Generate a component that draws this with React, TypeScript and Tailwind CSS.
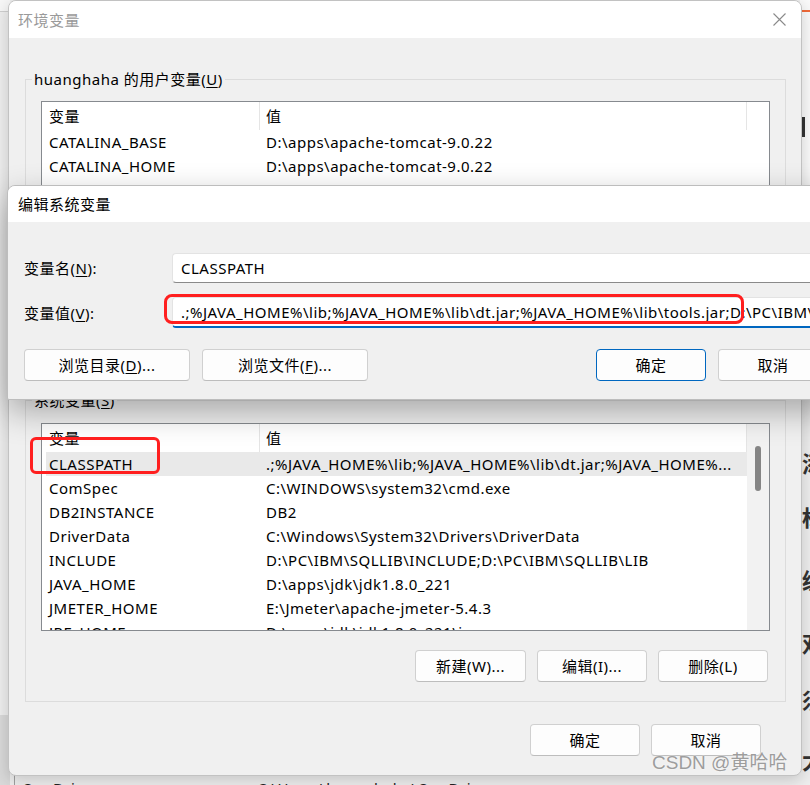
import React from "react";

type Row = [string, string];

function Btn({ children, w, primary }: { children: React.ReactNode; w: string; primary?: boolean }) {
  return (
    <div
      className={
        "h-[32px] rounded-[4px] flex items-center justify-center shrink-0 bg-[#fdfdfd] border " +
        (primary ? "border-[#0067c0] " : "border-[#d0d0d0] border-b-[#bdbdbd] ") +
        w
      }
    >
      {children}
    </div>
  );
}

function VarList({ rows, selected, scrollbar }: { rows: Row[]; selected?: number; scrollbar?: boolean }) {
  return (
    <div className="h-[208px] border border-[#868a8f] bg-white flex overflow-hidden">
      <div className="w-[705px] flex flex-col shrink-0">
        <div className="h-[28px] flex shrink-0">
          <div className="w-[218px] h-full flex items-center pl-[7px] border-r border-[#e5e5e5]">变量</div>
          <div className="flex-1 h-full flex items-center pl-[6px] border-r border-[#e5e5e5]">值</div>
        </div>
        {rows.map(([k, v], i) => (
          <div
            key={k}
            className={
              "h-[24px] flex items-center shrink-0 ml-[4px] " + (i === selected ? "bg-[#e9e9e9]" : "")
            }
          >
            <div className="w-[214px] pl-[3px] whitespace-nowrap overflow-hidden">{k}</div>
            <div className="flex-1 pl-[6px] whitespace-nowrap overflow-hidden">{v}</div>
          </div>
        ))}
      </div>
      <div className={"flex-1 flex justify-center " + (scrollbar ? "bg-[#f2f2f2]" : "bg-white")}>
        {scrollbar && <div className="mt-[22px] w-[6px] h-[45px] rounded-[3px] bg-[#858585]" />}
      </div>
    </div>
  );
}

const userRows: Row[] = [
  ["CATALINA_BASE", "D:\\apps\\apache-tomcat-9.0.22"],
  ["CATALINA_HOME", "D:\\apps\\apache-tomcat-9.0.22"],
  ["OneDrive", "C:\\Users\\huanghaha\\OneDrive"],
  ["Path", "C:\\Users\\huanghaha\\AppData\\Local\\Microsoft\\WindowsApps;"],
  ["TEMP", "C:\\Users\\huanghaha\\AppData\\Local\\Temp"],
  ["TMP", "C:\\Users\\huanghaha\\AppData\\Local\\Temp"],
  ["ZES_ENABLE_SYSMAN", "1"],
];

const sysRows: Row[] = [
  ["CLASSPATH", ".;%JAVA_HOME%\\lib;%JAVA_HOME%\\lib\\dt.jar;%JAVA_HOME%..."],
  ["ComSpec", "C:\\WINDOWS\\system32\\cmd.exe"],
  ["DB2INSTANCE", "DB2"],
  ["DriverData", "C:\\Windows\\System32\\Drivers\\DriverData"],
  ["INCLUDE", "D:\\PC\\IBM\\SQLLIB\\INCLUDE;D:\\PC\\IBM\\SQLLIB\\LIB"],
  ["JAVA_HOME", "D:\\apps\\jdk\\jdk1.8.0_221"],
  ["JMETER_HOME", "E:\\Jmeter\\apache-jmeter-5.4.3"],
  ["JRE_HOME", "D:\\apps\\jdk\\jdk1.8.0_221\\jre"],
];

export default function App() {
  return (
    <div className="relative w-[810px] h-[785px] overflow-hidden bg-[#eeeeee] text-black text-[15px] leading-[20px] tracking-[0.5px] [font-family:'Noto_Sans','Noto_Sans_CJK_SC',sans-serif]">
      {/* background desktop: left strip */}
      <div className="absolute left-0 top-0 w-[10px] h-[12px] bg-[#f7f7f7] border-b border-[#cfcfcf]" />
      <div className="absolute left-0 top-[715px] w-[10px] h-[70px] bg-[#d9d9d9]" />
      {/* right strip */}
      <div className="absolute left-[800px] top-0 w-[10px] h-[400px] bg-[#fafafa]" />
      <div className="absolute left-[800px] top-[10px] w-[10px] h-[2px] bg-[#f26b3a]" />
      <div className="absolute left-[802px] top-[117px] w-[3px] h-[20px] bg-[#333]" />
      <div className="absolute left-[802px] top-[452px] flex flex-col text-[22px] leading-[22px] font-bold text-[#333] tracking-normal">
        <span className="h-[54px]">添</span>
        <span className="h-[63px]">标</span>
        <span className="h-[63px]">级</span>
        <span className="h-[57px]">双</span>
        <span className="h-[60px]">须</span>
        <span>大</span>
      </div>
      {/* bottom strip */}
      <div className="absolute left-[14px] top-[770px] w-[1px] h-[20px] bg-[#a0a0a0]" />
      <div className="absolute left-[22px] top-[778px] flex text-[#222] whitespace-nowrap">
        <span className="w-[235px]">OneDrive</span>
        <span>C:\Users\huanghaha\OneDrive</span>
      </div>

      {/* main dialog: 环境变量 */}
      <div className="absolute left-[8px] top-0 w-[794px] h-[776px] rounded-[8px] border border-[#c2c2c2] bg-[#f0f0f0] overflow-hidden flex flex-col shadow-[0_4px_16px_rgba(0,0,0,0.18)]">
        <div className="h-[37px] shrink-0 bg-white flex items-center justify-between pl-[9px] pr-[15px]">
          <span className="text-[#9a9a9a]">环境变量</span>
          <svg width="13" height="13" viewBox="0 0 13 13">
            <path d="M0.5 0.5 L12.5 12.5 M12.5 0.5 L0.5 12.5" stroke="#8a8a8a" strokeWidth="1.1" fill="none" />
          </svg>
        </div>
        <div className="flex flex-col px-[16px] pr-[15px]">
          <fieldset className="mt-[31px] border border-[#dcdcdc] px-[15px] pt-[12px] pb-[19px]">
            <legend className="-ml-[9px] px-[2px] h-[20px]">huanghaha 的用户变量(<span className="underline underline-offset-2">U</span>)</legend>
            <VarList rows={userRows} />
            <div className="mt-[19px] flex justify-end gap-[11px] pr-[2px]">
              <Btn w="w-[111px]">新建(N)...</Btn>
              <Btn w="w-[110px]">编辑(E)...</Btn>
              <Btn w="w-[110px]">删除(D)</Btn>
            </div>
          </fieldset>
          <fieldset className="mt-[10px] border border-[#dcdcdc] px-[15px] pt-[13px] pb-[19px]">
            <legend className="-ml-[9px] px-[2px] h-[20px]">系统变量(<span className="underline underline-offset-2">S</span>)</legend>
            <VarList rows={sysRows} selected={0} scrollbar />
            <div className="mt-[19px] flex justify-end gap-[11px] pr-[2px]">
              <Btn w="w-[111px]">新建(W)...</Btn>
              <Btn w="w-[110px]">编辑(I)...</Btn>
              <Btn w="w-[110px]">删除(L)</Btn>
            </div>
          </fieldset>
          <div className="mt-[22px] flex justify-end gap-[11px] pr-[25px]">
            <Btn w="w-[110px]">确定</Btn>
            <Btn w="w-[110px]">取消</Btn>
          </div>
        </div>
      </div>

      {/* edit dialog: 编辑系统变量 */}
      <div className="absolute left-[7px] top-[185px] w-[832px] h-[215px] rounded-tl-[8px] rounded-bl-[2px] border border-[#bdbdbd] bg-[#f0f0f0] overflow-hidden flex flex-col shadow-[0_12px_32px_rgba(0,0,0,0.30)]">
        <div className="h-[36px] shrink-0 bg-white flex items-center pl-[10px]">编辑系统变量</div>
        <div className="flex flex-col pl-[16px] pr-[10px] pt-[31px]">
          <div className="flex items-center">
            <div className="w-[148px] shrink-0">
              变量名(<span className="underline underline-offset-2">N</span>):
            </div>
            <div className="flex-1 h-[30px] bg-white rounded-[4px] border border-[#e3e3e3] border-b-[#8a8a8a] flex items-center pl-[8px]">
              CLASSPATH
            </div>
          </div>
          <div className="flex items-center mt-[14px]">
            <div className="w-[148px] shrink-0">
              变量值(<span className="underline underline-offset-2">V</span>):
            </div>
            <div className="flex-1 h-[31px] bg-white rounded-[4px] border border-[#e3e3e3] border-b-2 border-b-[#0067c0] flex items-center pl-[8px] overflow-hidden whitespace-nowrap">
              .;%JAVA_HOME%\lib;%JAVA_HOME%\lib\dt.jar;%JAVA_HOME%\lib\tools.jar;D:\PC\IBM\SQLLIB\java\db2java.zip
            </div>
          </div>
          <div className="flex mt-[21px] gap-[12px]">
            <Btn w="w-[166px]">
              浏览目录(<span className="underline underline-offset-2">D</span>)...
            </Btn>
            <Btn w="w-[166px]">
              浏览文件(<span className="underline underline-offset-2">F</span>)...
            </Btn>
            <div className="ml-auto flex gap-[12px]">
              <Btn w="w-[110px]" primary>确定</Btn>
              <Btn w="w-[110px]">取消</Btn>
            </div>
          </div>
        </div>
      </div>

      {/* red highlight boxes */}
      <div className="absolute left-[164px] top-[294px] w-[580px] h-[30px] rounded-[8px] border-[3px] border-[#ff1f1f]" />
      <div className="absolute left-[30px] top-[437px] w-[130px] h-[37px] rounded-[6px] border-[3px] border-[#ff1f1f]" />

      {/* watermark */}
      <div className="absolute left-[652px] top-[751px] text-[19px] leading-[24px] tracking-normal text-[#9d9d9d] [font-family:'Liberation_Sans','Noto_Sans_CJK_SC',sans-serif] [text-shadow:0_0_2px_rgba(255,255,255,0.9)] whitespace-nowrap">
        CSDN @黄哈哈
      </div>
    </div>
  );
}
